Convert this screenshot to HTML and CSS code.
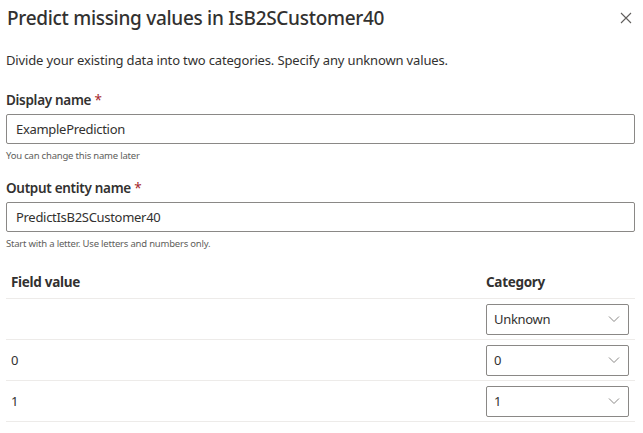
FILE: index.html
```html
<!DOCTYPE html>
<html>
<head>
<meta charset="utf-8">
<link rel="stylesheet" href="styles.css">
</head>
<body>
<div class="panel">
  <div class="header">
    <h1 class="title">Predict missing values in IsB2SCustomer40</h1>
    <button class="close" aria-label="Close">
      <svg width="12" height="12" viewBox="0 0 12 12"><path d="M1 1L11 11M11 1L1 11" stroke="#605e5c" stroke-width="1.1" fill="none"/></svg>
    </button>
  </div>
  <p class="subtitle">Divide your existing data into two categories. Specify any unknown values.</p>

  <div class="field">
    <label class="label">Display name <span class="req">*</span></label>
    <div class="input">ExamplePrediction</div>
    <div class="help">You can change this name later</div>
  </div>

  <div class="field">
    <label class="label">Output entity name <span class="req">*</span></label>
    <div class="input">PredictIsB2SCustomer40</div>
    <div class="help">Start with a letter. Use letters and numbers only.</div>
  </div>

  <div class="table">
    <div class="row head">
      <div class="c1">Field value</div>
      <div class="c2">Category</div>
    </div>
    <div class="row">
      <div class="c1"></div>
      <div class="c2"><div class="dd"><span>Unknown</span><svg width="12" height="8" viewBox="0 0 12 8"><path d="M1 1.5L6 6.5L11 1.5" stroke="#8a8886" stroke-width="1" fill="none"/></svg></div></div>
    </div>
    <div class="row">
      <div class="c1">0</div>
      <div class="c2"><div class="dd"><span>0</span><svg width="12" height="8" viewBox="0 0 12 8"><path d="M1 1.5L6 6.5L11 1.5" stroke="#8a8886" stroke-width="1" fill="none"/></svg></div></div>
    </div>
    <div class="row">
      <div class="c1">1</div>
      <div class="c2"><div class="dd"><span>1</span><svg width="12" height="8" viewBox="0 0 12 8"><path d="M1 1.5L6 6.5L11 1.5" stroke="#8a8886" stroke-width="1" fill="none"/></svg></div></div>
    </div>
  </div>
</div>
</body>
</html>
```

FILE: styles.css
```css
html, body {
  margin: 0;
  padding: 0;
  background: #ffffff;
}
body {
  font-family: "Noto Sans", "Open Sans", sans-serif;
  color: #323130;
}
.panel {
  padding: 4px 8px 0 6px;
}
.header {
  display: flex;
  align-items: center;
  justify-content: space-between;
  height: 28px;
}
.title {
  margin: 0 0 0 1px;
  font-size: 19px;
  font-weight: 500;
  line-height: 28px;
  letter-spacing: -0.3px;
}
.close {
  border: none;
  background: none;
  padding: 0;
  margin-right: 3px;
  width: 12px;
  height: 12px;
  display: flex;
}
.subtitle {
  margin: 18px 0 0 0;
  font-size: 13px;
  line-height: 20px;
  letter-spacing: -0.15px;
}
.field {
  margin-top: 20px;
}
.field + .field {
  margin-top: 15px;
}
.label {
  display: block;
  font-size: 13.5px;
  font-weight: 600;
  line-height: 20px;
  letter-spacing: -0.3px;
  margin-bottom: 4px;
}
.req {
  color: #a4262c;
  font-weight: 400;
}
.input {
  height: 28px;
  border: 1px solid #8a8886;
  border-radius: 2px;
  padding: 0 9px;
  font-size: 13px;
  line-height: 28px;
  letter-spacing: -0.3px;
}
.help {
  font-size: 9.5px;
  line-height: 14px;
  color: #605e5c;
  margin-top: 5px;
  letter-spacing: -0.2px;
}
.table {
  margin-top: 15px;
}
.row {
  display: flex;
  align-items: center;
  height: 40px;
  border-bottom: 1px solid #edebe9;
}
.row.head {
  height: 32px;
  font-weight: 700;
  font-size: 13.5px;
  letter-spacing: -0.3px;
}
.c1 {
  flex: 1;
  padding-left: 5px;
  font-size: 13px;
}
.row.head .c1, .row.head .c2 {
  font-size: 13.5px;
}
.c2 {
  width: 143px;
  margin-right: 6px;
  font-size: 13px;
}
.dd {
  height: 29px;
  border: 1px solid #8a8886;
  border-radius: 2px;
  display: flex;
  align-items: center;
  justify-content: space-between;
  padding: 0 8px 0 7px;
  letter-spacing: -0.3px;
}
```
